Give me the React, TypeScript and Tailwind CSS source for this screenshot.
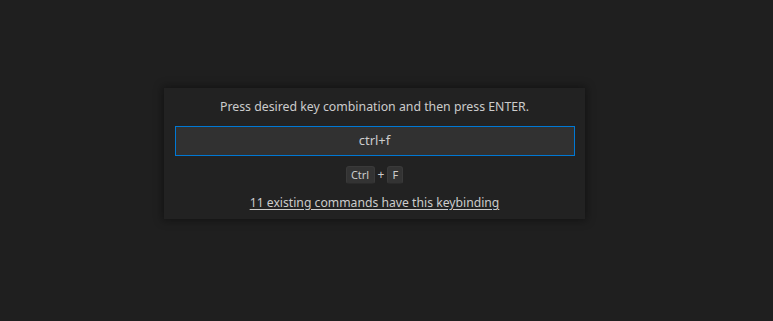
export default function App() {
  return (
    <div
      className="w-[773px] h-[321px] bg-[#1f1f1f] pt-[88px] pl-[164px]"
      style={{ fontFamily: '"Noto Sans", "Open Sans", sans-serif' }}
    >
      <div className="w-[421px] h-[131px] bg-[#222222] shadow-[0_0_8px_2px_rgba(0,0,0,0.36)] flex flex-col items-center pt-[10px]">
        <div className="text-[12.3px] leading-[18px] text-[#cccccc]">
          Press desired key combination and then press ENTER.
        </div>
        <div className="mt-[10px] w-[400px] h-[30px] bg-[#313131] border border-[#0078d4] flex items-center justify-center text-[13px] text-[#cccccc]">
          ctrl+f
        </div>
        <div className="mt-[10px] flex items-center gap-[3px] text-[11px] text-[#cccccc]">
          <span className="h-[18px] w-[29px] justify-center bg-[#333333] rounded-[3px] border border-[#3a3a3a] border-b-[#2a2a2a] flex items-center">
            Ctrl
          </span>
          <span className="text-[12px]">+</span>
          <span className="h-[18px] w-[16px] justify-center bg-[#333333] rounded-[3px] border border-[#3a3a3a] border-b-[#2a2a2a] flex items-center">
            F
          </span>
        </div>
        <a className="mt-[10px] text-[12.2px] leading-[18px] text-[#cccccc] underline underline-offset-[2px] cursor-pointer">
          11 existing commands have this keybinding
        </a>
      </div>
    </div>
  );
}
